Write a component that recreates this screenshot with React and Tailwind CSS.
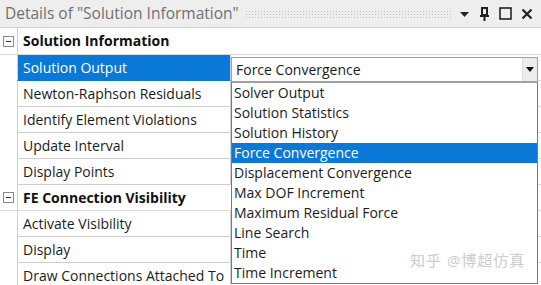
import React from "react";

const rows = [
  { type: "header", label: "Solution Information" },
  { label: "Solution Output", selected: true },
  { label: "Newton-Raphson Residuals" },
  { label: "Identify Element Violations" },
  { label: "Update Interval" },
  { label: "Display Points" },
  { type: "header", label: "FE Connection Visibility" },
  { label: "Activate Visibility" },
  { label: "Display" },
  { label: "Draw Connections Attached To" },
];

const options = [
  "Solver Output",
  "Solution Statistics",
  "Solution History",
  "Force Convergence",
  "Displacement Convergence",
  "Max DOF Increment",
  "Maximum Residual Force",
  "Line Search",
  "Time",
  "Time Increment",
];

function MinusBox() {
  return (
    <div className="w-[11px] h-[11px] border border-[#8a8a8a] bg-white flex items-center justify-center">
      <div className="w-[5px] h-px bg-[#333]" />
    </div>
  );
}

function TitleBar() {
  return (
    <div className="h-[28px] flex items-center bg-[#eeeeee] border-b border-[#cfcfcf] pl-[5px] pr-[8px]">
      <span className="text-[15.5px] text-[#707070] whitespace-nowrap">Details of "Solution Information"</span>
      <div className="ml-[6px] mr-[8px] flex-1 h-[8px] bg-[radial-gradient(#c0c0c0_0.6px,transparent_0.7px)] bg-[length:3px_3px]" />
      <div className="flex items-center gap-[9px] text-[#222]">
        <svg width="11" height="8" viewBox="0 0 11 8"><path d="M1 2h9l-4.5 5z" fill="#222" /></svg>
        <svg width="11" height="14" viewBox="0 0 11 14">
          <path d="M3 1h5v7H3z" fill="none" stroke="#222" strokeWidth="2" />
          <path d="M1 9h9M5.5 9v5" stroke="#222" strokeWidth="2" />
        </svg>
        <svg width="13" height="13" viewBox="0 0 13 13"><rect x="1" y="1" width="11" height="11" fill="none" stroke="#222" strokeWidth="1.6" /></svg>
        <svg width="12" height="12" viewBox="0 0 12 12"><path d="M1.5 1.5l9 9M10.5 1.5l-9 9" stroke="#222" strokeWidth="2.2" /></svg>
      </div>
    </div>
  );
}

function Row({ row, first }) {
  if (row.type === "header") {
    return (
      <div className={`flex ${first ? "h-[27px]" : "h-[26px]"} border-b border-[#dadada]`}>
        <div className="w-[17px] shrink-0 flex items-center pl-[3px] bg-white">
          <MinusBox />
        </div>
        <div className="flex-1 flex items-center pl-[5px] border-l border-[#cfcfcf] font-bold text-[14px] text-[#111]">
          {row.label}
        </div>
      </div>
    );
  }
  return (
    <div className="flex h-[26px]">
      <div className="w-[17px] shrink-0 bg-white" />
      <div
        className={`w-[214px] shrink-0 flex items-center pl-[5px] border-l border-b border-r border-[#cfcfcf] text-[14px] ${
          row.selected ? "bg-[#0a78d7] text-white border-b-[#0a78d7]" : "text-[#1b1b1b]"
        }`}
      >
        {row.label}
      </div>
      <div className="flex-1 border-b border-[#dadada]" />
    </div>
  );
}

function Dropdown() {
  return (
    <div className="absolute left-[231px] top-[57px] w-[307px]">
      <div className="h-[25px] flex items-center border border-[#a0a0a0] bg-white">
        <span className="pl-[4px] flex-1 text-[14px] text-[#1b1b1b]">Force Convergence</span>
        <div className="w-[15px] h-full bg-[#ececec] border-l border-[#e0e0e0] flex items-center justify-center">
          <svg width="8" height="5" viewBox="0 0 8 5"><path d="M0 0h8L4 5z" fill="#111" /></svg>
        </div>
      </div>
      <div className="border border-[#7a7a7a] border-t-[#a0a0a0] bg-white">
        {options.map((o) => (
          <div
            key={o}
            className={`h-[20px] flex items-center pl-[2px] text-[14px] ${
              o === "Force Convergence" ? "bg-[#0a78d7] text-white" : "text-[#1b1b1b]"
            }`}
          >
            {o}
          </div>
        ))}
      </div>
    </div>
  );
}

export default function App() {
  return (
    <div className="relative w-[541px] h-[285px] overflow-hidden bg-white font-['Open_Sans','Noto_Sans_CJK_SC',sans-serif] leading-none">
      <TitleBar />
      <div className="flex flex-col">
        {rows.map((r, i) => (
          <Row key={r.label} row={r} first={i === 0} />
        ))}
      </div>
      <Dropdown />
      <div className="absolute left-[410px] top-[253px] text-[15px] text-[#cccccc] tracking-[1px] whitespace-nowrap">
        知乎 @博超仿真
      </div>
    </div>
  );
}
